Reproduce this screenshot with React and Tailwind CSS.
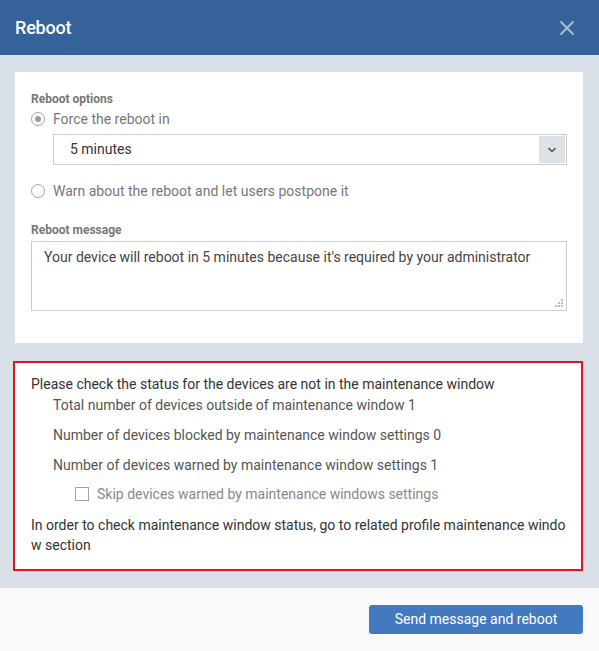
import { X } from "lucide-react";

function Radio({ checked }) {
  return (
    <span className="w-[14px] h-[14px] rounded-full border-[1.5px] border-[#a3a3a3] flex items-center justify-center shrink-0">
      {checked && <span className="w-[6px] h-[6px] rounded-full bg-[#9a9a9a]" />}
    </span>
  );
}

export default function App() {
  return (
    <div
      className="w-[599px] h-[651px] flex flex-col bg-[#d9e0e7] overflow-hidden"
      style={{ fontFamily: "Roboto, 'Liberation Sans', sans-serif" }}
    >
      {/* Header */}
      <div className="h-[55px] shrink-0 bg-[#356399] flex items-center justify-between pl-[15px] pr-[20px]">
        <h1 className="text-[18px] font-medium text-white tracking-[-0.2px]">Reboot</h1>
        <X className="w-[24px] h-[24px] text-[#a7bcd6]" strokeWidth={2} />
      </div>

      {/* Body */}
      <div className="flex-1 flex flex-col pt-[17px] pb-[17px] pl-[13px] pr-[16px]">
        <div className="bg-white ml-[2px] px-[16px] pt-[19px] pb-[32px]">
          <div className="text-[12px] leading-[16px] font-bold text-[#777]">Reboot options</div>
          <label className="flex items-center gap-[8px] mt-[2px] h-[20px]">
            <Radio checked />
            <span className="text-[14px] text-[#777]">Force the reboot in</span>
          </label>
          <div className="ml-[22px] mt-[5px] h-[31px] border border-[#ccc] flex items-center justify-between">
            <span className="pl-[16px] text-[14px] text-[#333]">5 minutes</span>
            <span className="w-[26px] h-[27px] mr-[1px] bg-[#dde2e7] flex items-center justify-center">
              <svg width="10" height="6" viewBox="0 0 10 6">
                <path d="M1.5 1.2 L5 4.5 L8.5 1.2" fill="none" stroke="#555" strokeWidth="1.6" />
              </svg>
            </span>
          </div>
          <label className="flex items-center gap-[8px] mt-[16px] h-[20px]">
            <Radio />
            <span className="text-[14px] text-[#777]">Warn about the reboot and let users postpone it</span>
          </label>
          <div className="text-[12px] leading-[16px] font-bold text-[#777] mt-[21px]">Reboot message</div>
          <div className="relative mt-[3px] h-[70px] border border-[#ccc] px-[12px] pt-[6px]">
            <p className="text-[14px] leading-[18px] text-[#444]">
              Your device will reboot in 5 minutes because it's required by your administrator
            </p>
            <svg className="absolute right-[2px] bottom-[2px]" width="9" height="9" viewBox="0 0 9 9">
              <rect x="6" y="0" width="2" height="2" fill="#bbb" />
              <rect x="3" y="3" width="2" height="2" fill="#bbb" />
              <rect x="6" y="3" width="2" height="2" fill="#bbb" />
              <rect x="0" y="6" width="2" height="2" fill="#bbb" />
              <rect x="3" y="6" width="2" height="2" fill="#bbb" />
              <rect x="6" y="6" width="2" height="2" fill="#bbb" />
            </svg>
          </div>
        </div>

        <div className="mt-[18px] bg-white border-2 border-[#e81123] pl-[16px] pr-[14px] pt-[11px] pb-[14px] text-[14px] leading-[20px]">
          <p className="text-[#333]">Please check the status for the devices are not in the maintenance window</p>
          <p className="pl-[22px] mt-[1px] text-[#555]">Total number of devices outside of maintenance window 1</p>
          <p className="pl-[22px] mt-[10px] text-[#555]">Number of devices blocked by maintenance window settings 0</p>
          <p className="pl-[22px] mt-[10px] text-[#555]">Number of devices warned by maintenance window settings 1</p>
          <label className="pl-[44px] mt-[9px] flex items-center gap-[8px]">
            <span className="w-[14px] h-[14px] border border-[#a3a3a3] bg-white shrink-0" />
            <span className="text-[#888]">Skip devices warned by maintenance windows settings</span>
          </label>
          <p className="mt-[11px] text-[#333] break-all">
            In order to check maintenance window status, go to related profile maintenance window section
          </p>
        </div>
      </div>

      {/* Footer */}
      <div className="h-[63px] shrink-0 bg-[#fafafa] flex items-center justify-end pr-[16px]">
        <button className="w-[214px] h-[29px] rounded-[3px] bg-[#4279bf] text-white text-[14px]">
          Send message and reboot
        </button>
      </div>
    </div>
  );
}
